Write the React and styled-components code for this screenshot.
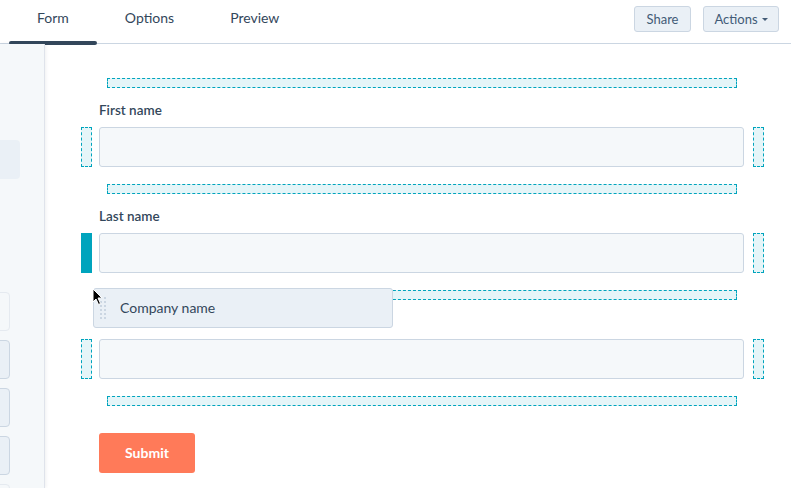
import React from "react";
import styled, { createGlobalStyle } from "styled-components";

const Global = createGlobalStyle`
  html, body { margin: 0; padding: 0; background: #fff; }
  body { font-family: Lato, "Open Sans", "Liberation Sans", sans-serif; color: #33475b; }
  * { box-sizing: border-box; }
`;

const Page = styled.div`
  width: 791px;
  height: 488px;
  overflow: hidden;
  display: flex;
  flex-direction: column;
`;

const Header = styled.header`
  height: 44px;
  flex: none;
  border-bottom: 1px solid #cbd6e2;
  display: flex;
  align-items: stretch;
  justify-content: space-between;
  padding: 0 12px 0 9px;
  position: relative;
`;

const Tabs = styled.nav`
  display: flex;
  align-items: stretch;
`;

const Tab = styled.div`
  position: relative;
  padding: 0 ${(p) => p.$pad}px 9px;
  display: flex;
  align-items: center;
  font-size: 14px;
  color: #33475b;
  &::after {
    content: "";
    display: ${(p) => (p.$active ? "block" : "none")};
    position: absolute;
    left: 0;
    right: 0;
    bottom: -2px;
    height: 4px;
    border-radius: 3px;
    background: #33475b;
  }
`;

const Actions = styled.div`
  display: flex;
  gap: 12px;
  padding-top: 6px;
  align-items: flex-start;
`;

const Button = styled.button`
  height: 26px;
  width: ${(p) => p.$w}px;
  padding: 0;
  justify-content: center;
  background: #eaf0f6;
  border: 1px solid #cbd6e2;
  border-radius: 3px;
  font-family: inherit;
  font-size: 13px;
  color: #425b76;
  display: flex;
  align-items: center;
  gap: 4px;
`;

const Caret = styled.span`
  width: 0;
  height: 0;
  border-left: 3px solid transparent;
  border-right: 3px solid transparent;
  border-top: 3px solid #425b76;
  margin-top: 1px;
`;

const Body = styled.div`
  flex: 1;
  display: flex;
  min-height: 0;
`;

const Sidebar = styled.aside`
  width: 45px;
  flex: none;
  background: #f5f8fa;
  border-right: 1px solid #dfe3eb;
  box-shadow: 1px 0 3px rgba(45, 62, 80, 0.08);
  overflow: hidden;
  display: flex;
  flex-direction: column;
  position: relative;
  z-index: 1;
`;

const SideItem = styled.div`
  flex: none;
  width: 20px;
  height: 39px;
  margin-top: 96px;
  background: #eaf0f6;
  border-radius: 0 4px 4px 0;
`;

const CardList = styled.div`
  flex: none;
  margin-top: 113px;
  display: flex;
  flex-direction: column;
  gap: 9px;
`;

const SideCard = styled.div`
  flex: none;
  width: 40px;
  height: 39px;
  margin-left: -30px;
  border-radius: 4px;
  border: 1px solid ${(p) => (p.$faded ? "#e5eaf0" : "#cbd6e2")};
  background: ${(p) => (p.$faded ? "#f5f8fa" : "#eaf0f6")};
`;

const Main = styled.main`
  flex: 1;
  position: relative;
  padding: 34px 0 0 36px;
  display: flex;
  flex-direction: column;
`;

const HZone = styled.div`
  margin-left: 26px;
  width: 630px;
  height: 10px;
  border: 1px dashed #00a4bd;
  background: #e5f5f8;
`;

const Field = styled.div`
  display: flex;
  flex-direction: column;
  padding: 14px 0 17px;
`;

const Label = styled.label`
  margin-left: 18px;
  height: 16px;
  line-height: 16px;
  font-size: 13.5px;
  font-weight: 600;
  color: #33475b;
  margin-bottom: 9px;
  visibility: ${(p) => (p.$hidden ? "hidden" : "visible")};
`;

const InputRow = styled.div`
  display: flex;
  height: 40px;
`;

const VZone = styled.div`
  width: 11px;
  flex: none;
  border: ${(p) => (p.$active ? "none" : "1px dashed #00a4bd")};
  background: ${(p) => (p.$active ? "#00a4bd" : "#e5f5f8")};
`;

const Input = styled.div`
  width: 645px;
  flex: none;
  margin: 0 9px 0 7px;
  background: #f5f8fa;
  border: 1px solid #cbd6e2;
  border-radius: 3px;
`;

const Submit = styled.button`
  margin: 27px 0 0 18px;
  width: 96px;
  height: 40px;
  padding: 0 0 2px;
  border: none;
  border-radius: 3px;
  background: #ff7a59;
  color: #fff;
  font-family: inherit;
  font-size: 14px;
  font-weight: 700;
`;

const DragCard = styled.div`
  position: absolute;
  left: 48px;
  top: 244px;
  width: 300px;
  height: 40px;
  background: #eaf0f6;
  border: 1px solid #cbd6e2;
  border-radius: 3px;
  display: flex;
  align-items: center;
  padding: 0 0 1px 26px;
  font-size: 14px;
  color: #33475b;
`;

const Grip = styled.div`
  position: absolute;
  left: 6px;
  top: 8px;
  display: grid;
  grid-template-columns: 2px 2px;
  gap: 2px;
`;

const Dot = styled.span`
  width: 2px;
  height: 2px;
  background: #cbd6e2;
`;

const Cursor = styled.svg`
  position: absolute;
  left: 47px;
  top: 244px;
  width: 12px;
  height: 18px;
`;

const fields = [
  { label: "First name" },
  { label: "Last name", active: true },
  { label: "Company name", hidden: true },
];

export default function App() {
  return (
    <Page>
      <Global />
      <Header>
        <Tabs>
          <Tab $active $pad={28}>Form</Tab>
          <Tab $pad={28}>Options</Tab>
          <Tab $pad={28}>Preview</Tab>
        </Tabs>
        <Actions>
          <Button $w={57}>Share</Button>
          <Button $w={76}>
            Actions <Caret />
          </Button>
        </Actions>
      </Header>
      <Body>
        <Sidebar>
          <SideItem />
          <CardList>
            <SideCard $faded />
            <SideCard />
            <SideCard />
            <SideCard />
            <SideCard $faded />
          </CardList>
        </Sidebar>
        <Main>
          <HZone />
          {fields.map((f) => (
            <React.Fragment key={f.label}>
              <Field>
                <Label $hidden={f.hidden}>{f.label}</Label>
                <InputRow>
                  <VZone $active={f.active} />
                  <Input />
                  <VZone />
                </InputRow>
              </Field>
              <HZone />
            </React.Fragment>
          ))}
          <div>
            <Submit>Submit</Submit>
          </div>
          <DragCard>
            <Grip>
              {Array.from({ length: 12 }).map((_, i) => (
                <Dot key={i} />
              ))}
            </Grip>
            Company name
          </DragCard>
          <Cursor viewBox="0 0 12 18">
            <path
              d="M1 1 L1 14 L4 11 L6.5 16.5 L8.5 15.5 L6 10 L10 10 Z"
              fill="#000"
              stroke="#fff"
              strokeWidth="1"
              strokeLinejoin="round"
            />
          </Cursor>
        </Main>
      </Body>
    </Page>
  );
}
